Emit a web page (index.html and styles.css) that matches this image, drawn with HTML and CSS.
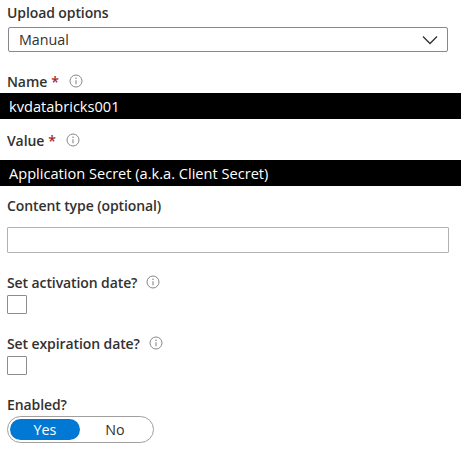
FILE: index.html
```html
<!DOCTYPE html>
<html>
<head>
<meta charset="utf-8">
<link rel="stylesheet" href="styles.css">
</head>
<body>
<div class="form">
  <div class="field f-upload">
    <div class="label">Upload options</div>
    <div class="select">
      <span>Manual</span>
      <svg class="chev" width="16" height="10" viewBox="0 0 16 10"><path d="M1 1.5 L8 8.5 L15 1.5" fill="none" stroke="#323130" stroke-width="1.3"/></svg>
    </div>
  </div>

  <div class="field f-name">
    <div class="label">Name<span class="req">*</span><svg class="info" width="14" height="14" viewBox="0 0 14 14"><circle cx="7" cy="7" r="6" fill="none" stroke="#8a8886" stroke-width="1"/><circle cx="7" cy="4.3" r="0.8" fill="#8a8886"/><path d="M7 6.2 V10.3" stroke="#8a8886" stroke-width="1.1"/></svg></div>
    <div class="redacted">kvdatabricks001</div>
  </div>

  <div class="field f-value">
    <div class="label">Value<span class="req">*</span><svg class="info" width="14" height="14" viewBox="0 0 14 14"><circle cx="7" cy="7" r="6" fill="none" stroke="#8a8886" stroke-width="1"/><circle cx="7" cy="4.3" r="0.8" fill="#8a8886"/><path d="M7 6.2 V10.3" stroke="#8a8886" stroke-width="1.1"/></svg></div>
    <div class="redacted">Application Secret (a.k.a. Client Secret)</div>
  </div>

  <div class="field f-content">
    <div class="label">Content type (optional)</div>
    <div class="input"></div>
  </div>

  <div class="field f-act">
    <div class="label">Set activation date?<svg class="info wide" width="14" height="14" viewBox="0 0 14 14"><circle cx="7" cy="7" r="6" fill="none" stroke="#8a8886" stroke-width="1"/><circle cx="7" cy="4.3" r="0.8" fill="#8a8886"/><path d="M7 6.2 V10.3" stroke="#8a8886" stroke-width="1.1"/></svg></div>
    <div class="checkbox"></div>
  </div>

  <div class="field f-exp">
    <div class="label">Set expiration date?<svg class="info wide" width="14" height="14" viewBox="0 0 14 14"><circle cx="7" cy="7" r="6" fill="none" stroke="#8a8886" stroke-width="1"/><circle cx="7" cy="4.3" r="0.8" fill="#8a8886"/><path d="M7 6.2 V10.3" stroke="#8a8886" stroke-width="1.1"/></svg></div>
    <div class="checkbox"></div>
  </div>

  <div class="field f-enabled">
    <div class="label">Enabled?</div>
    <div class="toggle">
      <div class="opt on">Yes</div>
      <div class="opt">No</div>
    </div>
  </div>
</div>
</body>
</html>
```

FILE: styles.css
```css
* { box-sizing: border-box; }
html, body { margin: 0; padding: 0; background: #fff; }
body {
  font-family: "Open Sans", "Noto Sans", "Liberation Sans", sans-serif;
  font-size: 14px;
  color: #323130;
}
.form {
  display: flex;
  flex-direction: column;
  padding-top: 2px;
}
.field { display: flex; flex-direction: column; }
.label {
  display: flex;
  align-items: center;
  height: 20px;
  padding-left: 7px;
  font-size: 14px;
  font-weight: 600;
  color: #323130;
  letter-spacing: -0.1px;
}
.req { color: #a4262c; margin-left: 4px; font-weight: 600; }
.info { margin-left: 10px; }
.info.wide { margin-left: 9px; }

.select {
  margin: 5px 17px 0 8px;
  height: 25px;
  border: 1px solid #8a8886;
  border-radius: 2px;
  display: flex;
  align-items: center;
  justify-content: space-between;
  padding: 0 8px 0 10px;
  font-weight: 400;
  font-size: 14.3px;
}
.chev { margin-right: 1px; }

.f-name { margin-top: 19px; }
.f-value { margin-top: 11px; }
.redacted {
  margin-top: 2px;
  width: 461px;
  height: 26px;
  background: #000;
  color: #fff;
  display: flex;
  align-items: center;
  padding-left: 9px;
  font-size: 14.6px;
}
.f-value .redacted { margin-top: 10px; }

.f-content { margin-top: 9px; }
.input {
  margin: 12px 16px 0 7px;
  height: 26px;
  border: 1.5px solid #b3b0ad;
  border-radius: 1px;
}

.f-act { margin-top: 19px; }
.f-exp { margin-top: 19px; }
.checkbox {
  margin: 3px 0 0 7px;
  width: 20px;
  height: 19px;
  border: 1.5px solid #8f8d8b;
  border-radius: 1px;
}

.f-enabled { margin-top: 19px; }
.toggle {
  margin: 2px 0 0 7px;
  width: 147px;
  height: 27px;
  border: 1.5px solid #a19f9d;
  border-radius: 14px;
  display: flex;
  align-items: center;
  padding: 0 2px;
}
.opt {
  flex: 0 0 70px;
  height: 21px;
  border-radius: 11px;
  display: flex;
  align-items: center;
  justify-content: center;
  font-weight: 400;
  font-size: 14.3px;
  color: #323130;
}
.opt.on { background: #0078d4; color: #fff; }
```
